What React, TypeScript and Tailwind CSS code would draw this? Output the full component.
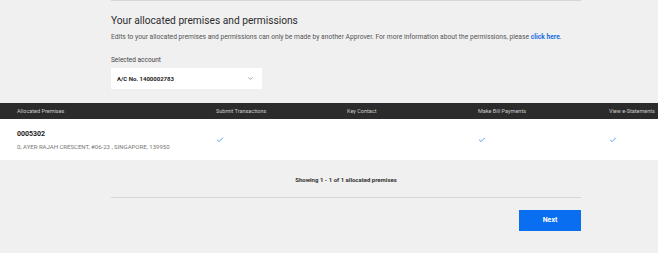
import { ChevronDown, Check } from "lucide-react";

const font = { fontFamily: "Roboto, 'Liberation Sans', sans-serif" };

function App() {
  return (
    <div className="w-[658px] h-[253px] bg-[#f0f0f0] overflow-hidden text-[#333]" style={font}>
      <div className="ml-[111px] w-[470px]">
        <div className="h-px bg-[#d6d6d6]" />
        <h1 className="mt-[13px] text-[10.2px] leading-[14px] text-[#2b2b2b]">
          Your allocated premises and permissions
        </h1>
        <p className="mt-[4px] text-[6.7px] leading-[10px] text-[#555] whitespace-nowrap">
          Edits to your allocated premises and permissions can only be made by another Approver. For more information about the permissions, please{" "}
          <span className="font-bold text-[#1a6fe0]">click here</span>.
        </p>
        <div className="mt-[14px] text-[6.5px] leading-[9px] text-[#444]">Selected account</div>
        <div className="mt-[3px] w-[151px] h-[21px] bg-white flex items-center justify-between pl-[6px] pr-[8px]">
          <span className="text-[6px] font-bold text-[#222]">A/C No. 1400002783</span>
          <ChevronDown className="w-[7px] h-[7px] text-[#666]" strokeWidth={2} />
        </div>
      </div>

      <div className="mt-[14px] h-[16px] bg-[#2b2b2b] flex items-center text-[5.5px] text-[#ccc] whitespace-nowrap">
        <div className="w-[216px] shrink-0 pl-[17px]">Allocated Premises</div>
        <div className="w-[131px] shrink-0">Submit Transactions</div>
        <div className="w-[131px] shrink-0">Key Contact</div>
        <div className="w-[131px] shrink-0">Make Bill Payments</div>
        <div className="w-[131px] shrink-0">View e-Statements</div>
      </div>
      <div className="h-[41px] bg-white flex items-center">
        <div className="w-[216px] shrink-0 pl-[17px]">
          <div className="text-[7px] font-bold text-[#222] leading-[10px]">0005302</div>
          <div className="mt-[4px] text-[6px] text-[#777] leading-[8px] whitespace-nowrap">
            0, AYER RAJAH CRESCENT, #06-23 , SINGAPORE, 139950
          </div>
        </div>
        <div className="w-[131px] shrink-0">
          <Check className="w-[8px] h-[8px] text-[#3d8ef0]" strokeWidth={2.5} />
        </div>
        <div className="w-[131px] shrink-0" />
        <div className="w-[131px] shrink-0">
          <Check className="w-[8px] h-[8px] text-[#3d8ef0]" strokeWidth={2.5} />
        </div>
        <div className="w-[131px] shrink-0">
          <Check className="w-[8px] h-[8px] text-[#3d8ef0]" strokeWidth={2.5} />
        </div>
      </div>

      <div className="ml-[111px] w-[470px]">
        <div className="mt-[15px] text-center text-[6px] font-bold text-[#333] leading-[9px]">
          Showing 1 - 1 of 1 allocated premises
        </div>
        <div className="mt-[13px] h-px bg-[#d6d6d6]" />
        <div className="mt-[12px] flex justify-end">
          <button className="w-[62px] h-[21px] bg-[#0a6ef0] text-white text-[7px] font-bold">Next</button>
        </div>
      </div>
    </div>
  );
}

export default App;
